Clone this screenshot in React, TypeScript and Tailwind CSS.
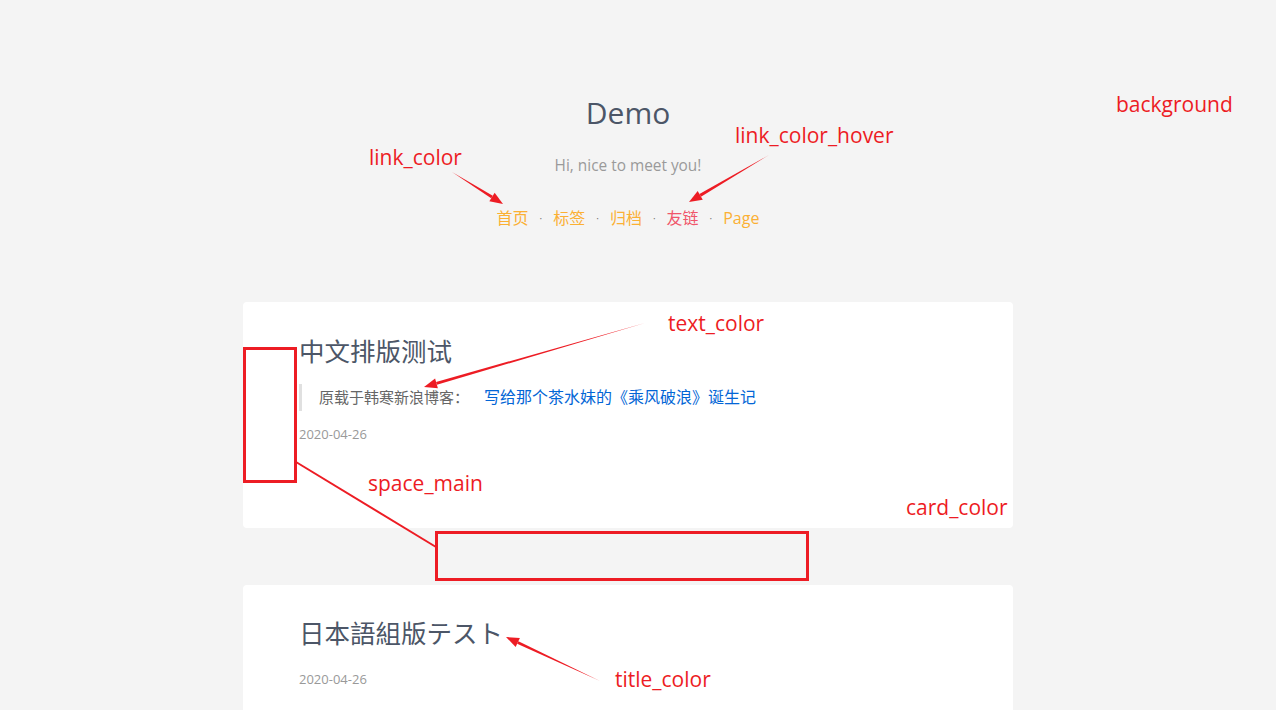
import React from 'react';

const font = { fontFamily: '"Open Sans", "Noto Sans CJK SC", sans-serif' };

const navItems = [
  { label: '首页', hover: false },
  { label: '标签', hover: false },
  { label: '归档', hover: false },
  { label: '友链', hover: true },
  { label: 'Page', hover: false },
];

// red notes drawn over the page
const Note = ({ x, y, children }: { x: number; y: number; children: React.ReactNode }) => (
  <div
    className="absolute text-[21px] leading-[26px] text-[#ed1c24] whitespace-nowrap"
    style={{ left: x, top: y }}
  >
    {children}
  </div>
);

const Arrow = ({ x1, y1, x2, y2 }: { x1: number; y1: number; x2: number; y2: number }) => {
  const a = Math.atan2(y2 - y1, x2 - x1);
  const len = 13;
  const w = 5;
  const bx = x2 - Math.cos(a) * len;
  const by = y2 - Math.sin(a) * len;
  const px = -Math.sin(a) * w;
  const py = Math.cos(a) * w;
  const tx = -Math.sin(a) * 1.5;
  const ty = Math.cos(a) * 1.5;
  return (
    <g fill="#ed1c24">
      <polygon points={`${x1},${y1} ${bx + tx},${by + ty} ${bx - tx},${by - ty}`} />
      <polygon points={`${x2},${y2} ${bx + px},${by + py} ${bx - px},${by - py}`} />
    </g>
  );
};

export default function App() {
  return (
    <div className="relative h-[710px] w-[1276px] overflow-hidden bg-[#f4f4f4]" style={font}>
      <div className="w-[1256px] flex flex-col items-center">
        {/* Header */}
        <h1 className="mt-[93px] text-[30px] leading-[40px] text-[#4c5667]">Demo</h1>
        <p className="mt-[21px] text-[15.4px] leading-[24px] text-[#9a9a9a]">Hi, nice to meet you!</p>
        <nav className="mt-[28px] flex items-center text-[16px] leading-[24px]">
          {navItems.map((item, i) => (
            <React.Fragment key={item.label}>
              {i > 0 && <span className="mx-[11px] text-[10px] text-[#777]">·</span>}
              <span className={item.hover ? 'text-[#f0566a]' : 'text-[#fbb034]'}>{item.label}</span>
            </React.Fragment>
          ))}
        </nav>

        {/* Posts */}
        <div className="mt-[72px] w-[770px] h-[226px] bg-white rounded-[4px] pl-[56px] pt-[31px]">
          <h2 className="text-[25.5px] leading-[36px] text-[#4c5667]">中文排版测试</h2>
          <blockquote className="mt-[15px] border-l-[3px] border-[#e0e0e0] pl-[17px] text-[15px] leading-[27px] text-[#666]">
            原载于韩寒新浪博客：
            <span className="ml-[15px] text-[16px] text-[#0366d6]">写给那个茶水妹的《乘风破浪》诞生记</span>
          </blockquote>
          <div className="mt-[13px] text-[13px] leading-[20px] text-[#999]">2020-04-26</div>
        </div>

        <div className="mt-[57px] w-[770px] h-[200px] bg-white rounded-[4px] pl-[56px] pt-[30px]">
          <h2 className="text-[25.5px] leading-[36px] text-[#4c5667]">日本語組版テスト</h2>
          <div className="mt-[18px] text-[13px] leading-[20px] text-[#999]">2020-04-26</div>
        </div>
      </div>

      {/* Annotations */}
      <Note x={1116} y={91}>background</Note>
      <Note x={369} y={144}>link_color</Note>
      <Note x={735} y={122}>link_color_hover</Note>
      <Note x={668} y={310}>text_color</Note>
      <Note x={368} y={470}>space_main</Note>
      <Note x={906} y={494}>card_color</Note>
      <Note x={615} y={666}>title_color</Note>

      <div className="absolute left-[243px] top-[347px] w-[54px] h-[136px] border-[3px] border-[#ed1c24]" />
      <div className="absolute left-[435px] top-[531px] w-[374px] h-[50px] border-[3px] border-[#ed1c24]" />

      <svg className="absolute left-0 top-0" width="1276" height="710" viewBox="0 0 1276 710">
        <Arrow x1={452} y1={172} x2={503} y2={204} />
        <Arrow x1={769} y1={155} x2={689} y2={202} />
        <Arrow x1={645} y1={323} x2={424} y2={387} />
        <Arrow x1={600} y1={681} x2={506} y2={637} />
        <line x1={296} y1={462} x2={436} y2={547} stroke="#ed1c24" strokeWidth="2" />
      </svg>
    </div>
  );
}
